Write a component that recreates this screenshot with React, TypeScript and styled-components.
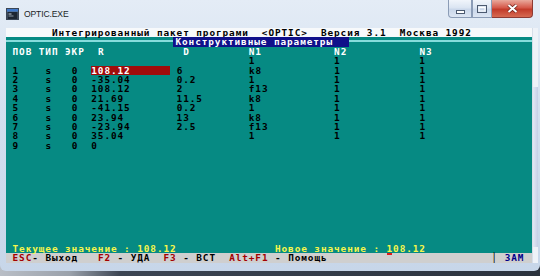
import React from 'react'
import styled, { createGlobalStyle } from 'styled-components'

// one text cell of the console, px
const CW = 6.575
const LH = 9.4
const FS = 9.4

const GlobalStyle = createGlobalStyle`
    html, body {
        margin: 0;
        padding: 0;
        width: 540px;
        height: 276px;
        overflow: hidden;
        background: linear-gradient(to right, #b9bec6 0, #9aa1ab 70px, #3c4553 120px, #2b323d 100%);
    }
`;

const Window = styled.div`
    width: 540px;
    height: 271px;
    box-sizing: border-box;
    padding: 0 2px 8px 6px;
    background: linear-gradient(to bottom, #e4ecf6 0, #d3e0ef 40%, #c7d6e9 100%);
    border-bottom-left-radius: 6px;
    border-bottom-right-radius: 6px;
    display: flex;
    flex-direction: column;
`;

const TitleBar = styled.div`
    height: 28px;
    display: flex;
    align-items: flex-start;
    margin-left: -6px;
    margin-right: -2px;
`;

const Caption = styled.span`
    margin: 9px 0 0 5px;
    font-family: "Liberation Sans", Arial, sans-serif;
    font-size: 8.6px;
    letter-spacing: -0.15px;
    color: #1b1f27;
`;

const CaptionButtons = styled.div`
    margin-left: auto;
    margin-right: 7px;
    display: flex;
`;

const CapBtn = styled.div<{ $w: number, $close?: boolean }>`
    width: ${props => props.$w}px;
    height: 18px;
    box-sizing: border-box;
    display: flex;
    align-items: center;
    justify-content: center;
    border: 1px solid ${props => props.$close ? '#8d3a33' : '#8b9cb6'};
    border-top: 0;
    background: ${props => props.$close
        ? 'linear-gradient(to bottom, #e9a99c 0, #d5594a 45%, #c23b2a 55%, #d66a52 100%)'
        : 'linear-gradient(to bottom, #f1f5fb 0, #dbe5f2 45%, #cad7ea 55%, #dde6f3 100%)'};
    &:first-child { border-bottom-left-radius: 4px; }
    &:last-child { border-bottom-right-radius: 4px; border-left: 0; }
`;

const Client = styled.div`
    display: flex;
`;

const Screen = styled.div`
    width: ${80 * CW}px;
    height: ${25 * LH}px;
    background: #068a83;
    font-family: "DejaVu Sans Mono", "Liberation Mono", monospace;
    font-weight: bold;
    font-size: ${FS}px;
    letter-spacing: ${CW - 0.602 * FS}px;
    color: #000;
    overflow: hidden;
`;

const Line = styled.div<{ $bg?: string }>`
    height: ${LH}px;
    line-height: ${LH}px;
    white-space: pre;
    background: ${props => props.$bg || 'transparent'};
`;

const tones: Record<string, string> = {
    dark: '#000',
    white: '#fff',
    yellow: '#f6f64c',
    red: '#a40000',
    navy: '#000088',
}

const Txt = styled.span<{ $tone?: string }>`
    color: ${props => tones[props.$tone || 'dark']};
`;

const Mark = styled.span`
    display: inline-block;
    vertical-align: top;
    width: ${12 * CW}px;
    height: ${LH}px;
    background: #a10c0c;
    color: #fff;
`;

const Cursor = styled.span`
    position: relative;
    &::after {
        content: '';
        position: absolute;
        left: 0;
        right: 1px;
        bottom: -1px;
        height: 2px;
        background: #e01818;
    }
`;

const RuleLine = styled(Line)`
    display: flex;
    align-items: flex-start;
`;

const Rule = styled.div<{ $w?: number }>`
    ${props => props.$w ? `width: ${props.$w}px;` : 'flex: 1;'}
    height: 2px;
    margin-top: 2.6px;
    background: #86dcdc;
`;

const Banner = styled.div`
    width: 176px;
    height: ${LH}px;
    box-sizing: border-box;
    padding-left: 2.5px;
    background: #10108a;
    color: #fff;
`;

const ScrollTrack = styled.div`
    width: 6px;
    height: ${25 * LH}px;
    background: #eef2f8;
    border-left: 1px solid #d6dee9;
    box-sizing: border-box;
    padding-top: 59px;
`;

const Thumb = styled.div`
    height: 160px;
    background: linear-gradient(to right, #e3e8f4, #c5cfe6);
`;

type Seg = { col: number, text: string, tone?: string, mark?: boolean, cursor?: boolean }

function renderSegs(segs: Seg[]) {
    let at = 0
    const out: React.ReactNode[] = []
    segs.forEach((s, i) => {
        if (s.col > at) out.push(' '.repeat(s.col - at))
        if (s.mark) {
            out.push(<Mark key={i}>{s.text}</Mark>)
            at = s.col + 12
            return
        }
        out.push(s.cursor
            ? <Cursor key={i}><Txt $tone={s.tone}>{s.text}</Txt></Cursor>
            : <Txt key={i} $tone={s.tone}>{s.text}</Txt>)
        at = s.col + s.text.length
    })
    return out
}

const rows = [
    ['1', '108.12', '6', 'k8'],
    ['2', '-35.04', '0.2', '1'],
    ['3', '108.12', '2', 'f13'],
    ['4', '21.69', '11.5', 'k8'],
    ['5', '-41.15', '0.2', '1'],
    ['6', '23.94', '13', 'k8'],
    ['7', '-23.94', '2.5', 'f13'],
    ['8', '35.04', '', '1'],
    ['9', '0', '', ''],
]

function ConsoleIcon() {
    return <svg width="13" height="12" viewBox="0 0 13 12" style={{ margin: '8px 0 0 6px' }}>
        <rect x="0.5" y="0.5" width="12" height="11" fill="#5d6b7f" stroke="#3b4656" />
        <rect x="1" y="1" width="11" height="2.5" fill="#3f78c9" />
        <rect x="1.5" y="4" width="10" height="7" fill="#1d2633" />
        <rect x="2.5" y="5.5" width="3" height="1" fill="#cfd6e0" />
        <rect x="2.5" y="7.5" width="5" height="1" fill="#8d99a8" />
    </svg>
}

export default function App() {
    const data: Seg[][] = rows.map((r, i) => {
        const segs: Seg[] = [
            { col: 1, text: r[0] },
            { col: 6, text: 's' },
            { col: 10, text: '0' },
            { col: 13, text: r[1], mark: i === 0 },
        ]
        if (r[2]) segs.push({ col: 26, text: r[2] })
        if (r[3]) segs.push({ col: 37, text: r[3] })
        if (i < 8) segs.push({ col: 50, text: '1' }, { col: 63, text: '1' })
        return segs
    })

    return <>
        <GlobalStyle />
        <Window>
            <TitleBar>
                <ConsoleIcon />
                <Caption>OPTIC.EXE</Caption>
                <CaptionButtons>
                    <CapBtn $w={24}>
                        <svg width="9" height="4" viewBox="0 0 9 4" style={{ marginTop: 6 }}>
                            <rect x="0.5" y="0.5" width="8" height="3" fill="#fff" stroke="#4c5a70" />
                        </svg>
                    </CapBtn>
                    <CapBtn $w={20}>
                        <svg width="10" height="8" viewBox="0 0 10 8">
                            <rect x="0.5" y="0.5" width="9" height="7" fill="none" stroke="#4c5a70" />
                            <rect x="2" y="2.5" width="6" height="3.5" fill="none" stroke="#fff" />
                        </svg>
                    </CapBtn>
                    <CapBtn $w={41} $close>
                        <svg width="11" height="9" viewBox="0 0 11 9">
                            <path d="M1.5 1 L9.5 8 M9.5 1 L1.5 8" stroke="#6a1d16" strokeWidth="3.4" />
                            <path d="M1.5 1 L9.5 8 M9.5 1 L1.5 8" stroke="#fff" strokeWidth="2" />
                        </svg>
                    </CapBtn>
                </CaptionButtons>
            </TitleBar>
            <Client>
                <Screen>
                    <Line $bg="#f7f9fb">
                        {renderSegs([{ col: 7, text: 'Интегрированный пакет програми  <OPTIC>  Версия 3.1  Москва 1992' }])}
                    </Line>
                    <RuleLine>
                        <Rule $w={167} />
                        <Banner>Конструктивные параметры</Banner>
                        <Rule />
                    </RuleLine>
                    <Line>
                        {renderSegs([
                            { col: 1, text: 'ПОВ', tone: 'white' },
                            { col: 5, text: 'ТИП', tone: 'white' },
                            { col: 9, text: 'ЭКР', tone: 'white' },
                            { col: 14, text: 'R', tone: 'white' },
                            { col: 27, text: 'D', tone: 'white' },
                            { col: 37, text: 'N1', tone: 'white' },
                            { col: 50, text: 'N2', tone: 'white' },
                            { col: 63, text: 'N3', tone: 'white' },
                        ])}
                    </Line>
                    <Line>
                        {renderSegs([{ col: 37, text: '1' }, { col: 50, text: '1' }, { col: 63, text: '1' }])}
                    </Line>
                    {data.map((segs, i) => <Line key={i}>{renderSegs(segs)}</Line>)}
                    {Array.from({ length: 10 }).map((_, i) => <Line key={'e' + i} />)}
                    <Line>
                        {renderSegs([
                            { col: 1, text: 'Текущее значение : 108.12', tone: 'yellow' },
                            { col: 41, text: 'Новое значение : ', tone: 'yellow' },
                            { col: 58, text: '1', tone: 'yellow', cursor: true },
                            { col: 59, text: '08.12', tone: 'yellow' },
                        ])}
                    </Line>
                    <Line $bg="#cfcfcf">
                        {renderSegs([
                            { col: 1, text: 'ESC', tone: 'red' },
                            { col: 4, text: '-' },
                            { col: 6, text: 'Выход' },
                            { col: 14, text: 'F2', tone: 'red' },
                            { col: 17, text: '-' },
                            { col: 19, text: 'УДА' },
                            { col: 24, text: 'F3', tone: 'red' },
                            { col: 27, text: '-' },
                            { col: 29, text: 'ВСТ' },
                            { col: 34, text: 'Alt+F1', tone: 'red' },
                            { col: 41, text: '-' },
                            { col: 43, text: 'Помощь' },
                            { col: 74, text: '│' },
                            { col: 76, text: 'ЗАМ', tone: 'navy' },
                        ])}
                    </Line>
                </Screen>
                <ScrollTrack>
                    <Thumb />
                </ScrollTrack>
            </Client>
        </Window>
    </>
}
